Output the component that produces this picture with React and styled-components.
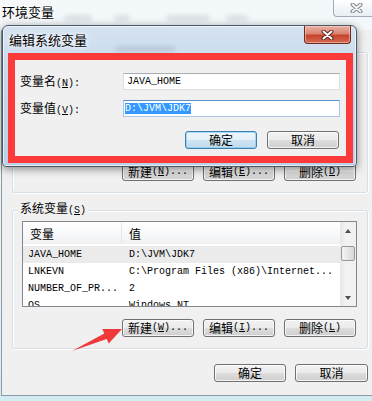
import styled, { createGlobalStyle } from "styled-components";

const GlobalStyle = createGlobalStyle`
  html, body {
    margin: 0;
    padding: 0;
    background: #eef3f6;
  }
  body {
    font-family: "Liberation Mono", "Noto Sans CJK SC", monospace;
    font-size: 10px;
    color: #000;
  }
`;

const Screen = styled.div`
  position: relative;
  width: 372px;
  height: 401px;
  overflow: hidden;
  background: linear-gradient(180deg, #f4f8fa 0%, #eaf2f5 70%, #d3ecf2 100%);
`;

const OuterWindow = styled.div`
  display: flex;
  flex-direction: column;
  width: 380px;
`;

const OuterTitleBar = styled.div`
  display: flex;
  align-items: flex-start;
  height: 30px;
`;

const Cjk = styled.span`
  font-family: "Noto Sans CJK SC", sans-serif;
  font-size: 12px;
  line-height: 14px;
`;

const OuterTitle = styled(Cjk)`
  margin: 5px 0 0 2px;
  font-size: 13px;
  text-shadow: 0 0 6px #fff, 0 0 3px #fff;
`;

const GhostStrip = styled.div`
  display: flex;
  flex: 1;
  margin: ${(p) => p.$top}px 0 0 ${(p) => p.$left}px;
`;

const GhostItem = styled.span`
  width: ${(p) => p.$w}px;
  margin-left: ${(p) => p.$gap || 0}px;
  height: 6px;
  border-radius: 3px;
  background: rgba(70, 85, 100, 0.14);
  filter: blur(2px);
`;

const OuterClose = styled.div`
  display: flex;
  align-items: center;
  justify-content: center;
  width: 43px;
  height: 17px;
  margin-right: 4px;
  padding-left: 4px;
  box-sizing: border-box;
  border: 1px solid #a3adb7;
  border-top: none;
  border-radius: 0 0 0 4px;
  background: linear-gradient(180deg, rgba(255, 255, 255, 0.95), rgba(232, 238, 243, 0.95));
`;

const OuterClient = styled.div`
  display: flex;
  flex-direction: column;
  width: 379px;
  margin-left: 1px;
  padding: 22px 12px 13px 10px;
  box-sizing: border-box;
  border-left: 1px solid #8d99a5;
  border-bottom: 1px solid #8d99a5;
  background: #f0f0f0;
`;

const GroupBox = styled.div`
  position: relative;
  display: flex;
  flex-direction: column;
  justify-content: flex-end;
  height: ${(p) => p.$height}px;
  margin-top: ${(p) => p.$gap || 0}px;
  padding: 10px ${(p) => p.$padRight}px 11px 9px;
  box-sizing: border-box;
  border: 1px solid #d5dfe5;
  border-radius: 3px;
  box-shadow: inset 1px 1px 0 #fff, 1px 1px 0 #fff;
`;

const Legend = styled(Cjk)`
  position: absolute;
  top: -10px;
  left: 5px;
  padding: 0 2px;
  background: #f0f0f0;
`;

const LegendKey = styled.span`
  font-family: "Liberation Mono", monospace;
  font-size: 10px;
`;

const ButtonRow = styled.div`
  display: flex;
  justify-content: flex-end;
  gap: ${(p) => p.$gap || 9}px;
  margin-top: ${(p) => p.$top || 0}px;
  padding-right: ${(p) => p.$padRight || 0}px;
`;

const Button = styled.div`
  display: flex;
  align-items: center;
  justify-content: center;
  width: ${(p) => p.$w || 72}px;
  height: 18px;
  box-sizing: border-box;
  border: 1px solid ${(p) => (p.$default ? "#3c7fb1" : "#707070")};
  border-radius: 3px;
  background: ${(p) =>
    p.$default
      ? "linear-gradient(180deg, #eef6fb 0%, #e3eff8 50%, #cfe3f1 51%, #c2dbee 100%)"
      : "linear-gradient(180deg, #f2f2f2 0%, #ebebeb 50%, #dddddd 51%, #cfcfcf 100%)"};
  box-shadow: inset 0 0 0 1px ${(p) => (p.$default ? "rgba(120, 200, 240, 0.6)" : "rgba(255, 255, 255, 0.75)")};
  white-space: nowrap;
  line-height: 14px;
`;

const ListBox = styled.div`
  display: flex;
  height: 86px;
  box-sizing: border-box;
  border: 1px solid #828790;
  background: #fff;
`;

const ListBody = styled.div`
  flex: 1;
  overflow: hidden;
`;

const ListHeader = styled.div`
  display: flex;
  height: 22px;
  margin-bottom: 2px;
  background: linear-gradient(180deg, #ffffff 0%, #f7f8f9 60%, #f1f2f4 100%);
  border-bottom: 1px solid #eceef1;
  box-sizing: border-box;
`;

const HeaderCell = styled.div`
  display: flex;
  align-items: center;
  width: ${(p) => (p.$w ? `${p.$w}px` : "auto")};
  flex: ${(p) => (p.$w ? "none" : 1)};
  padding: 2px 0 0 7px;
  box-sizing: border-box;
  border-right: ${(p) => (p.$w ? "1px solid #e3e5e8" : "none")};
`;

const ListRow = styled.div`
  display: flex;
  align-items: center;
  height: 17px;
  background: ${(p) => (p.$selected ? "#ebebeb" : "transparent")};
  white-space: nowrap;
`;

const NameCell = styled.span`
  width: 99px;
  padding-left: 5px;
  box-sizing: border-box;
  overflow: hidden;
`;

const ValueCell = styled.span`
  padding-left: 7px;
`;

const ScrollBar = styled.div`
  display: flex;
  flex-direction: column;
  align-items: center;
  width: 16px;
  background: linear-gradient(90deg, #e7e7e7 0%, #f3f3f3 40%, #f0f0f0 100%);
`;

const ScrollArrow = styled.div`
  display: flex;
  align-items: center;
  justify-content: center;
  height: 17px;
  width: 100%;
  margin-top: ${(p) => (p.$down ? "auto" : 0)};
`;

const Triangle = styled.span`
  width: 0;
  height: 0;
  border-left: 3.5px solid transparent;
  border-right: 3.5px solid transparent;
  ${(p) =>
    p.$down ? "border-top: 4px solid #4f4f4f;" : "border-bottom: 4px solid #4f4f4f;"}
`;

const Thumb = styled.div`
  width: 14px;
  height: 15px;
  margin-top: 7px;
  box-sizing: border-box;
  border: 1px solid #979797;
  border-radius: 2px;
  background: linear-gradient(90deg, #f4f4f4 0%, #e6e6e6 50%, #d8d8d8 100%);
`;

const EditDialog = styled.div`
  position: absolute;
  left: 2px;
  top: 25px;
  display: flex;
  flex-direction: column;
  width: 355px;
  height: 142px;
  padding: 0 3px 3px 5px;
  box-sizing: border-box;
  border: 1px solid #4d5b69;
  border-radius: 6px 6px 4px 4px;
  background: linear-gradient(180deg, #d5e3f1 0%, #c3d6ea 45%, #bcd0e6 100%);
  box-shadow: 0 2px 9px rgba(0, 0, 0, 0.45), inset 0 0 0 1px rgba(255, 255, 255, 0.6);
`;

const DialogTitleBar = styled.div`
  display: flex;
  align-items: flex-start;
  height: 27px;
`;

const DialogTitle = styled(Cjk)`
  margin: 7px 0 0 1px;
  font-size: 13px;
  text-shadow: 0 0 7px #fff, 0 0 3px #fff;
`;

const DialogClose = styled.div`
  display: flex;
  align-items: center;
  justify-content: center;
  width: 47px;
  height: 18px;
  margin: 0 2px 0 auto;
  box-sizing: border-box;
  border: 1px solid #6d2a1e;
  border-top: none;
  border-radius: 0 0 4px 4px;
  background: linear-gradient(180deg, #eab0a3 0%, #dd8472 45%, #c7432b 55%, #d56a52 100%);
  box-shadow: inset 0 0 0 1px rgba(255, 220, 210, 0.5);
`;

const EditClient = styled.div`
  display: flex;
  flex-direction: column;
  height: 110px;
  padding: 13px 6px 0 5px;
  box-sizing: border-box;
  border: 7px solid #fc3a3a;
  background: #f0f0f0;
`;

const FieldRow = styled.div`
  display: flex;
  align-items: center;
  height: 17px;
  margin-top: ${(p) => p.$top || 0}px;
`;

const FieldLabel = styled.span`
  width: 103px;
  white-space: nowrap;
`;

const TextBox = styled.div`
  display: flex;
  align-items: center;
  flex: 1;
  height: 17px;
  padding-left: ${(p) => (p.$focused ? 1 : 3)}px;
  box-sizing: border-box;
  border: 1px solid ${(p) => (p.$focused ? "#a9c8e8" : "#dadde3")};
  border-top-color: ${(p) => (p.$focused ? "#5c93c9" : "#abadb3")};
  background: #fff;
  line-height: 11px;
`;

const Selected = styled.span`
  background: #3399ff;
  color: #fff;
`;

const Arrow = styled.svg`
  position: absolute;
  left: 70px;
  top: 326px;
  pointer-events: none;
`;

const CloseGlyph = ({ fill, outline }) => (
  <svg width="13" height="10" viewBox="0 0 13 10">
    <path d="M2.5 1.5 L10.5 8.5 M10.5 1.5 L2.5 8.5" stroke={outline} strokeWidth="4" strokeLinecap="round" />
    <path d="M2.5 1.5 L10.5 8.5 M10.5 1.5 L2.5 8.5" stroke={fill} strokeWidth="2" strokeLinecap="round" />
  </svg>
);

const systemVars = [
  { name: "JAVA_HOME", value: "D:\\JVM\\JDK7", selected: true },
  { name: "LNKEVN", value: "C:\\Program Files (x86)\\Internet..." },
  { name: "NUMBER_OF_PR...", value: "2" },
  { name: "OS", value: "Windows_NT" },
];

const App = () => {
  return (
    <>
      <GlobalStyle />
      <Screen>
        <OuterWindow>
          <OuterTitleBar>
            <OuterTitle>环境变量</OuterTitle>
            <GhostStrip $top={15} $left={10}>
              <GhostItem $w={28} />
              <GhostItem $w={16} $gap={22} />
              <GhostItem $w={44} $gap={36} />
              <GhostItem $w={22} $gap={16} />
            </GhostStrip>
            <OuterClose>
              <CloseGlyph fill="#f7f7f7" outline="#7d858d" />
            </OuterClose>
          </OuterTitleBar>

          <OuterClient>
            <GroupBox $height={141} $padRight={11}>
              <ButtonRow>
                <Button>
                  <Cjk>新建</Cjk>(<u>N</u>)...
                </Button>
                <Button>
                  <Cjk>编辑</Cjk>(<u>E</u>)...
                </Button>
                <Button>
                  <Cjk>删除</Cjk>(<u>D</u>)
                </Button>
              </ButtonRow>
            </GroupBox>

            <GroupBox $height={139} $gap={17} $padRight={10}>
              <Legend>
                系统变量<LegendKey>(<u>S</u>)</LegendKey>
              </Legend>
              <ListBox>
                <ListBody>
                  <ListHeader>
                    <HeaderCell $w={99}>
                      <Cjk>变量</Cjk>
                    </HeaderCell>
                    <HeaderCell>
                      <Cjk>值</Cjk>
                    </HeaderCell>
                  </ListHeader>
                  {systemVars.map((v) => (
                    <ListRow key={v.name} $selected={v.selected}>
                      <NameCell>{v.name}</NameCell>
                      <ValueCell>{v.value}</ValueCell>
                    </ListRow>
                  ))}
                </ListBody>
                <ScrollBar>
                  <ScrollArrow>
                    <Triangle />
                  </ScrollArrow>
                  <Thumb />
                  <ScrollArrow $down>
                    <Triangle $down />
                  </ScrollArrow>
                </ScrollBar>
              </ListBox>
              <ButtonRow $top={12} $padRight={1}>
                <Button>
                  <Cjk>新建</Cjk>(<u>W</u>)...
                </Button>
                <Button>
                  <Cjk>编辑</Cjk>(<u>I</u>)...
                </Button>
                <Button>
                  <Cjk>删除</Cjk>(<u>L</u>)
                </Button>
              </ButtonRow>
            </GroupBox>

            <ButtonRow $top={15}>
              <Button>
                <Cjk>确定</Cjk>
              </Button>
              <Button $w={73}>
                <Cjk>取消</Cjk>
              </Button>
            </ButtonRow>
          </OuterClient>
        </OuterWindow>

        <EditDialog>
          <DialogTitleBar>
            <DialogTitle>编辑系统变量</DialogTitle>
            <GhostStrip $top={20} $left={28}>
              <GhostItem $w={60} />
            </GhostStrip>
            <DialogClose>
              <CloseGlyph fill="#ffffff" outline="#5b2620" />
            </DialogClose>
          </DialogTitleBar>
          <EditClient>
            <FieldRow>
              <FieldLabel>
                <Cjk>变量名</Cjk>(<u>N</u>):
              </FieldLabel>
              <TextBox>JAVA_HOME</TextBox>
            </FieldRow>
            <FieldRow $top={10}>
              <FieldLabel>
                <Cjk>变量值</Cjk>(<u>V</u>):
              </FieldLabel>
              <TextBox $focused>
                <Selected>D:\JVM\JDK7</Selected>
              </TextBox>
            </FieldRow>
            <ButtonRow $top={14} $gap={10} $padRight={1}>
              <Button $default>
                <Cjk>确定</Cjk>
              </Button>
              <Button>
                <Cjk>取消</Cjk>
              </Button>
            </ButtonRow>
          </EditClient>
        </EditDialog>

        <Arrow width="56" height="28" viewBox="0 0 56 28">
          <polygon points="2,25 34.3,7.6 32.3,3 52,3 38.7,17.6 36.7,13" fill="#f03a3a" />
        </Arrow>
      </Screen>
    </>
  );
};

export default App;
